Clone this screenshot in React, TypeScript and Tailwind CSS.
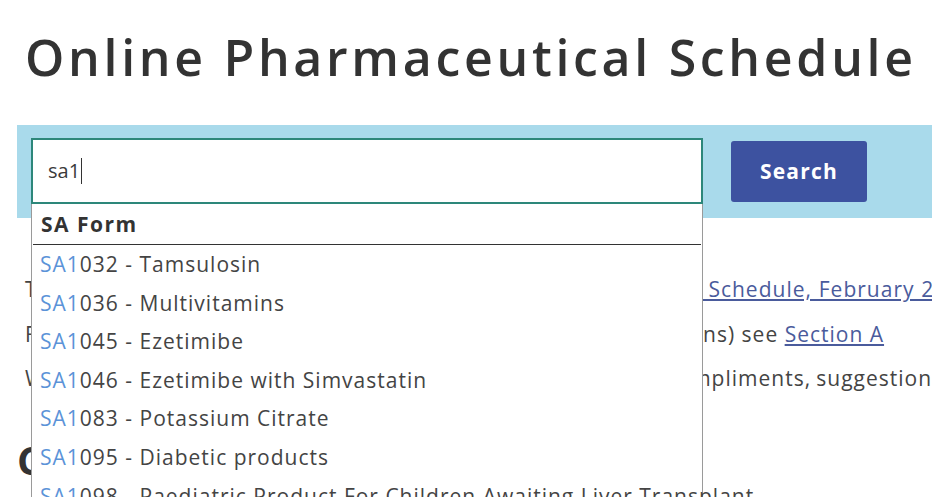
import React from "react";

const items: [string, string][] = [
  ["032", "Tamsulosin"],
  ["036", "Multivitamins"],
  ["045", "Ezetimibe"],
  ["046", "Ezetimibe with Simvastatin"],
  ["083", "Potassium Citrate"],
  ["095", "Diabetic products"],
  ["098", "Paediatric Product For Children Awaiting Liver Transplant"],
];

export default function App() {
  return (
    <div className="relative h-[497px] w-[932px] overflow-hidden bg-white text-[#3a3a3a] [font-family:'Open_Sans',sans-serif]">
      <h1 className="pl-[25px] pt-[22px] text-[50px] font-semibold leading-[70px] tracking-[3.7px] text-[#333] whitespace-nowrap">
        Online Pharmaceutical Schedule
      </h1>
      <div className="ml-[17px] mt-[33px] flex h-[93px] items-center bg-[#a9daeb] pl-[14px]">
        <div className="relative mt-[13px] h-[66px] w-[672px] self-start">
          <div className="flex h-full items-center border-2 border-[#2d877a] bg-white pl-[15px] text-[20px]">
            <span>sa1</span>
            <span className="ml-[1px] inline-block h-[26px] w-[1px] bg-[#333]" />
          </div>
          <div className="absolute left-0 top-full z-10 w-[672px] border-x border-[#9a9a9a] bg-white">
            <div className="mx-[1px] border-b border-[#333] px-[8px] pt-[5px] pb-[5px] text-[21px] font-bold leading-[30px] tracking-[1.5px] text-[#333]">
              SA Form
            </div>
            {items.map(([n, name]) => (
              <div key={n} className="whitespace-nowrap px-[8px] text-[21px] leading-[38.6px] tracking-[1px] text-[#444]">
                <span className="text-[#5b93d8]">SA1</span>
                {n} - {name}
              </div>
            ))}
          </div>
        </div>
        <button className="ml-[28px] h-[61px] w-[136px] rounded-[3px] bg-[#3d52a0] text-[21px] font-bold tracking-[1.2px] text-white">
          Search
        </button>
      </div>
      <div className="whitespace-nowrap pl-[25px] pt-[49px] text-[21px] leading-[44.5px] tracking-[1px] text-[#444]">
        <p className="[word-spacing:0.4px]">
          To download the printable PDF version see the{" "}
          <a className="text-[#4a5b9c] underline">Pharmaceutical Schedule, February 2024</a>
        </p>
        <p>
          For general rules and the explanatory notes (including definitions) see{" "}
          <a className="text-[#4a5b9c] underline">Section A</a>
        </p>
        <p className="[word-spacing:-1.3px]">
          We welcome any feedback you have on the Online Schedule (compliments, suggestions and complaints)
        </p>
      </div>
      <h2 className="pl-[17px] pt-[34px] text-[40px] font-bold leading-[50px] text-[#333]">Contents</h2>
    </div>
  );
}
